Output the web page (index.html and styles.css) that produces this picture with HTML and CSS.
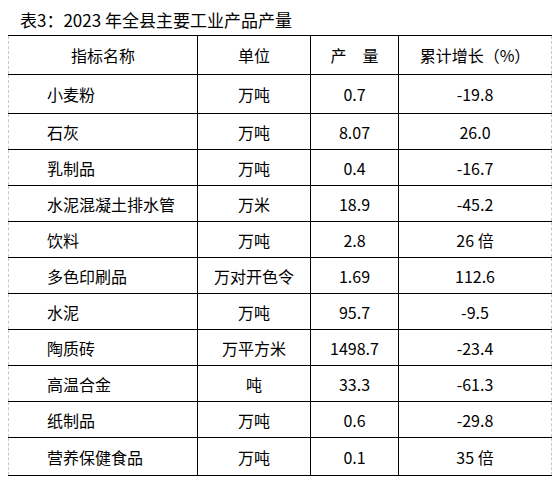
FILE: index.html
```html
<!DOCTYPE html>
<html lang="zh-CN">
<head>
    <meta charset="UTF-8">
    <meta name="viewport" content="width=device-width, initial-scale=1.0">
    <title>2023年全县主要工业产品产量</title>
    <link rel="stylesheet" href="styles.css">
</head>
<body>
    <h2 class="table-title">表3：2023 年全县主要工业产品产量</h2>

    <table class="stats-table">
        <colgroup>
            <col class="col-name">
            <col class="col-unit">
            <col class="col-output">
            <col class="col-growth">
        </colgroup>
        <thead>
            <tr>
                <th>指标名称</th>
                <th>单位</th>
                <th>产　量</th>
                <th>累计增长（%）</th>
            </tr>
        </thead>
        <tbody>
            <tr class="first-row"><td>小麦粉</td><td>万吨</td><td>0.7</td><td>-19.8</td></tr>
            <tr><td>石灰</td><td>万吨</td><td>8.07</td><td>26.0</td></tr>
            <tr><td>乳制品</td><td>万吨</td><td>0.4</td><td>-16.7</td></tr>
            <tr><td>水泥混凝土排水管</td><td>万米</td><td>18.9</td><td>-45.2</td></tr>
            <tr><td>饮料</td><td>万吨</td><td>2.8</td><td>26 倍</td></tr>
            <tr><td>多色印刷品</td><td>万对开色令</td><td>1.69</td><td>112.6</td></tr>
            <tr><td>水泥</td><td>万吨</td><td>95.7</td><td>-9.5</td></tr>
            <tr><td>陶质砖</td><td>万平方米</td><td>1498.7</td><td>-23.4</td></tr>
            <tr><td>高温合金</td><td>吨</td><td>33.3</td><td>-61.3</td></tr>
            <tr><td>纸制品</td><td>万吨</td><td>0.6</td><td>-29.8</td></tr>
            <tr class="last-row"><td>营养保健食品</td><td>万吨</td><td>0.1</td><td>35 倍</td></tr>
        </tbody>
    </table>
</body>
</html>
```

FILE: styles.css
```css
body {
    margin: 0;
    padding: 0 8px;
    background: #fff;
    color: #000;
    font-family: "Noto Sans CJK SC", "Noto Sans", sans-serif;
}
.table-title {
    margin: 0;
    padding: 9px 0 0 12px;
    height: 35px;
    box-sizing: border-box;
    font-size: 17px;
    font-weight: normal;
    line-height: 22px;
}
.stats-table {
    width: 543px;
    border-collapse: collapse;
    table-layout: fixed;
    font-size: 16px;
    border-left: 1px dashed #c8c8c8;
    border-right: 1px dashed #c8c8c8;
}
.col-name { width: 189px; }
.col-unit { width: 113px; }
.col-output { width: 88px; }
.col-growth { width: 153px; }
.stats-table th,
.stats-table td {
    border-top: 1px solid #000;
    border-bottom: 1px solid #000;
    padding: 0;
    height: 35px;
    text-align: center;
    vertical-align: middle;
    font-weight: normal;
    white-space: nowrap;
    line-height: 20px;
}
.stats-table th + th,
.stats-table td + td {
    border-left: 1px solid #000;
}
.stats-table th {
    height: 38px;
}
.stats-table td:first-child {
    text-align: left;
    padding-left: 38px;
}
.stats-table .first-row td {
    height: 38px;
}
.stats-table .last-row td {
    height: 37px;
}
```
